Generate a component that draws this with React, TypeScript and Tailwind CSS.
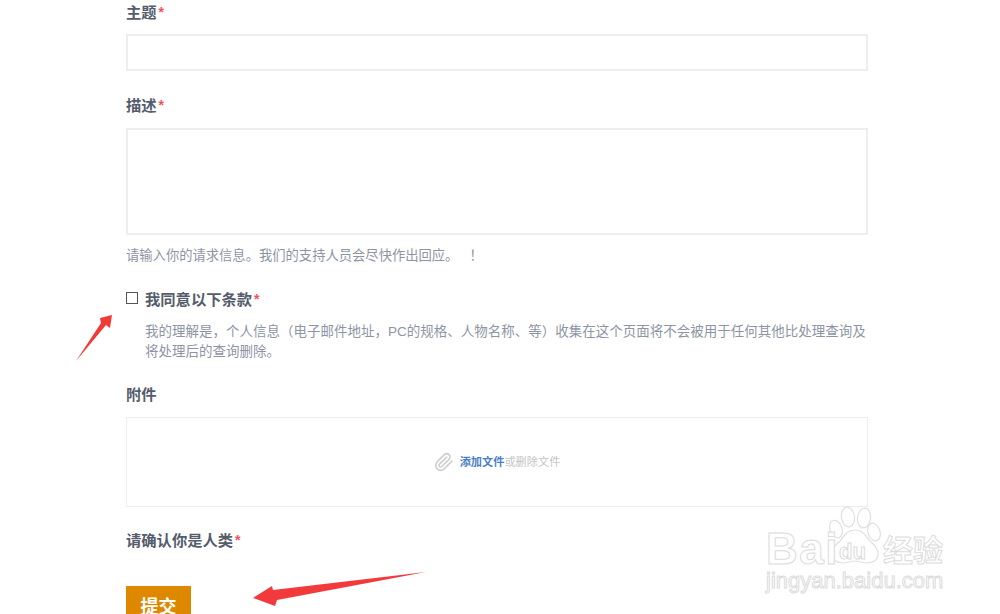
import React from "react";

const cjk = "font-['Liberation_Sans','Noto_Sans_CJK_SC',sans-serif]";

function Req() {
  return <span className="ml-[2px] text-[14px] text-[#f4505c] font-bold relative -top-[1px]">*</span>;
}

function Watermark() {
  const stroke = "text-white [-webkit-text-stroke:1px_#dcdcdc]";
  return (
    <div className="absolute left-[766px] top-[506px] w-[190px] h-[90px]">
      <svg className="absolute left-[0px] top-[0px]" width="150" height="70" viewBox="0 0 150 70" fill="#fff" stroke="#e0e0e0" strokeWidth="1.2">
        <ellipse cx="70" cy="23" rx="6" ry="9" transform="rotate(-20 70 23)" />
        <ellipse cx="82" cy="11" rx="6.5" ry="10" transform="rotate(-8 82 11)" />
        <ellipse cx="98" cy="12" rx="6.5" ry="10" transform="rotate(8 98 12)" />
        <ellipse cx="108" cy="26" rx="6" ry="9" transform="rotate(-18 108 26)" />
        <path d="M89 24c-8 0-11 6-15 11-5 4-8 8-8 13 0 6 5 9 11 9 4 0 8-2 12-2s8 2 12 2c6 0 11-3 11-9 0-5-3-9-8-13-4-5-7-11-15-11z" />
      </svg>
      <div className={`absolute left-[0px] top-[24px] text-[44px] leading-[38px] tracking-[1.5px] font-bold font-['Liberation_Sans',sans-serif] ${stroke}`}>Bai</div>
      <div className={`absolute left-[73px] top-[33px] text-[22px] leading-[26px] font-bold font-['Liberation_Sans',sans-serif] ${stroke}`}>du</div>
      <div className={`absolute left-[117px] top-[24px] text-[30px] leading-[36px] font-bold font-['Noto_Sans_CJK_SC',sans-serif] ${stroke}`}>经验</div>
      <div className={`absolute left-[0px] top-[64px] text-[22px] leading-[22px] font-['Liberation_Sans',sans-serif] ${stroke}`}>jingyan.baidu.com</div>
    </div>
  );
}

export default function App() {
  const label = "text-[15.3px] leading-[24px] font-bold text-[#555c6b]";
  return (
    <div className={`relative w-[1000px] h-[614px] overflow-hidden bg-white ${cjk}`}>
      <div className="ml-[126px] w-[742px] pt-[1px] flex flex-col">
        <div className={label}>主题<Req /></div>
        <div className="mt-[9px] h-[37px] border-2 border-[#eeeeee] bg-white" />
        <div className={`mt-[23px] ${label}`}>描述<Req /></div>
        <div className="mt-[10px] h-[107px] border-2 border-[#eeeeee] bg-white" />
        <div className="mt-[11px] text-[13.3px] leading-[20px] text-[#8d95a5]">请输入你的请求信息。我们的支持人员会尽快作出回应。&nbsp;&nbsp; ！</div>
        <div className="mt-[24px] flex items-start">
          <div className="mt-[2px] w-[12px] h-[12px] border border-[#555555] bg-white shrink-0" />
          <div className="ml-[7px] flex-1 min-w-0">
            <div className="text-[15.3px] leading-[20px] font-bold text-[#555c6b]">我同意以下条款<Req /></div>
            <div className="mt-[12px] text-[13.5px] leading-[20px] text-[#8d95a5]">我的理解是，个人信息（电子邮件地址，PC的规格、人物名称、等）收集在这个页面将不会被用于任何其他比处理查询及将处理后的查询删除。</div>
          </div>
        </div>
        <div className={`mt-[21px] ${label}`}>附件</div>
        <div className="mt-[10px] h-[90px] border border-[#eeeeee] flex items-center justify-center bg-white">
          <svg width="20" height="20" viewBox="0 0 24 24" fill="none" stroke="#cfcfcf" strokeWidth="2" strokeLinecap="round" strokeLinejoin="round" className="mr-[6px]">
            <path d="M21.44 11.05l-9.19 9.19a6 6 0 0 1-8.49-8.49l8.57-8.57A4 4 0 1 1 18 8.84l-8.59 8.57a2 2 0 0 1-2.83-2.83l8.49-8.48" />
          </svg>
          <span className="text-[11.2px] leading-[16px] font-bold text-[#4a7fc4]">添加文件</span>
          <span className="text-[11.2px] leading-[16px] text-[#c4c4c4]">或删除文件</span>
        </div>
        <div className={`mt-[22px] ${label}`}>请确认你是人类<Req /></div>
        <div className="mt-[33px] w-[65px] h-[48px] bg-[#de8800] text-white text-[18px] leading-[42px] text-center font-bold font-['Liberation_Serif','Noto_Sans_CJK_SC',serif]">提交</div>
      </div>

      <svg className="absolute left-0 top-0 pointer-events-none" width="1000" height="614" viewBox="0 0 1000 614">
        <path d="M76 361 L101 323 L100 318 L112 315 L110 328 L106 325 Z" fill="#f23a36" />
        <path d="M426 572 L273 590 L272 586 L253 598 L275 606 L277 600 Z" fill="#f23a3c" />
      </svg>
      <Watermark />
    </div>
  );
}
